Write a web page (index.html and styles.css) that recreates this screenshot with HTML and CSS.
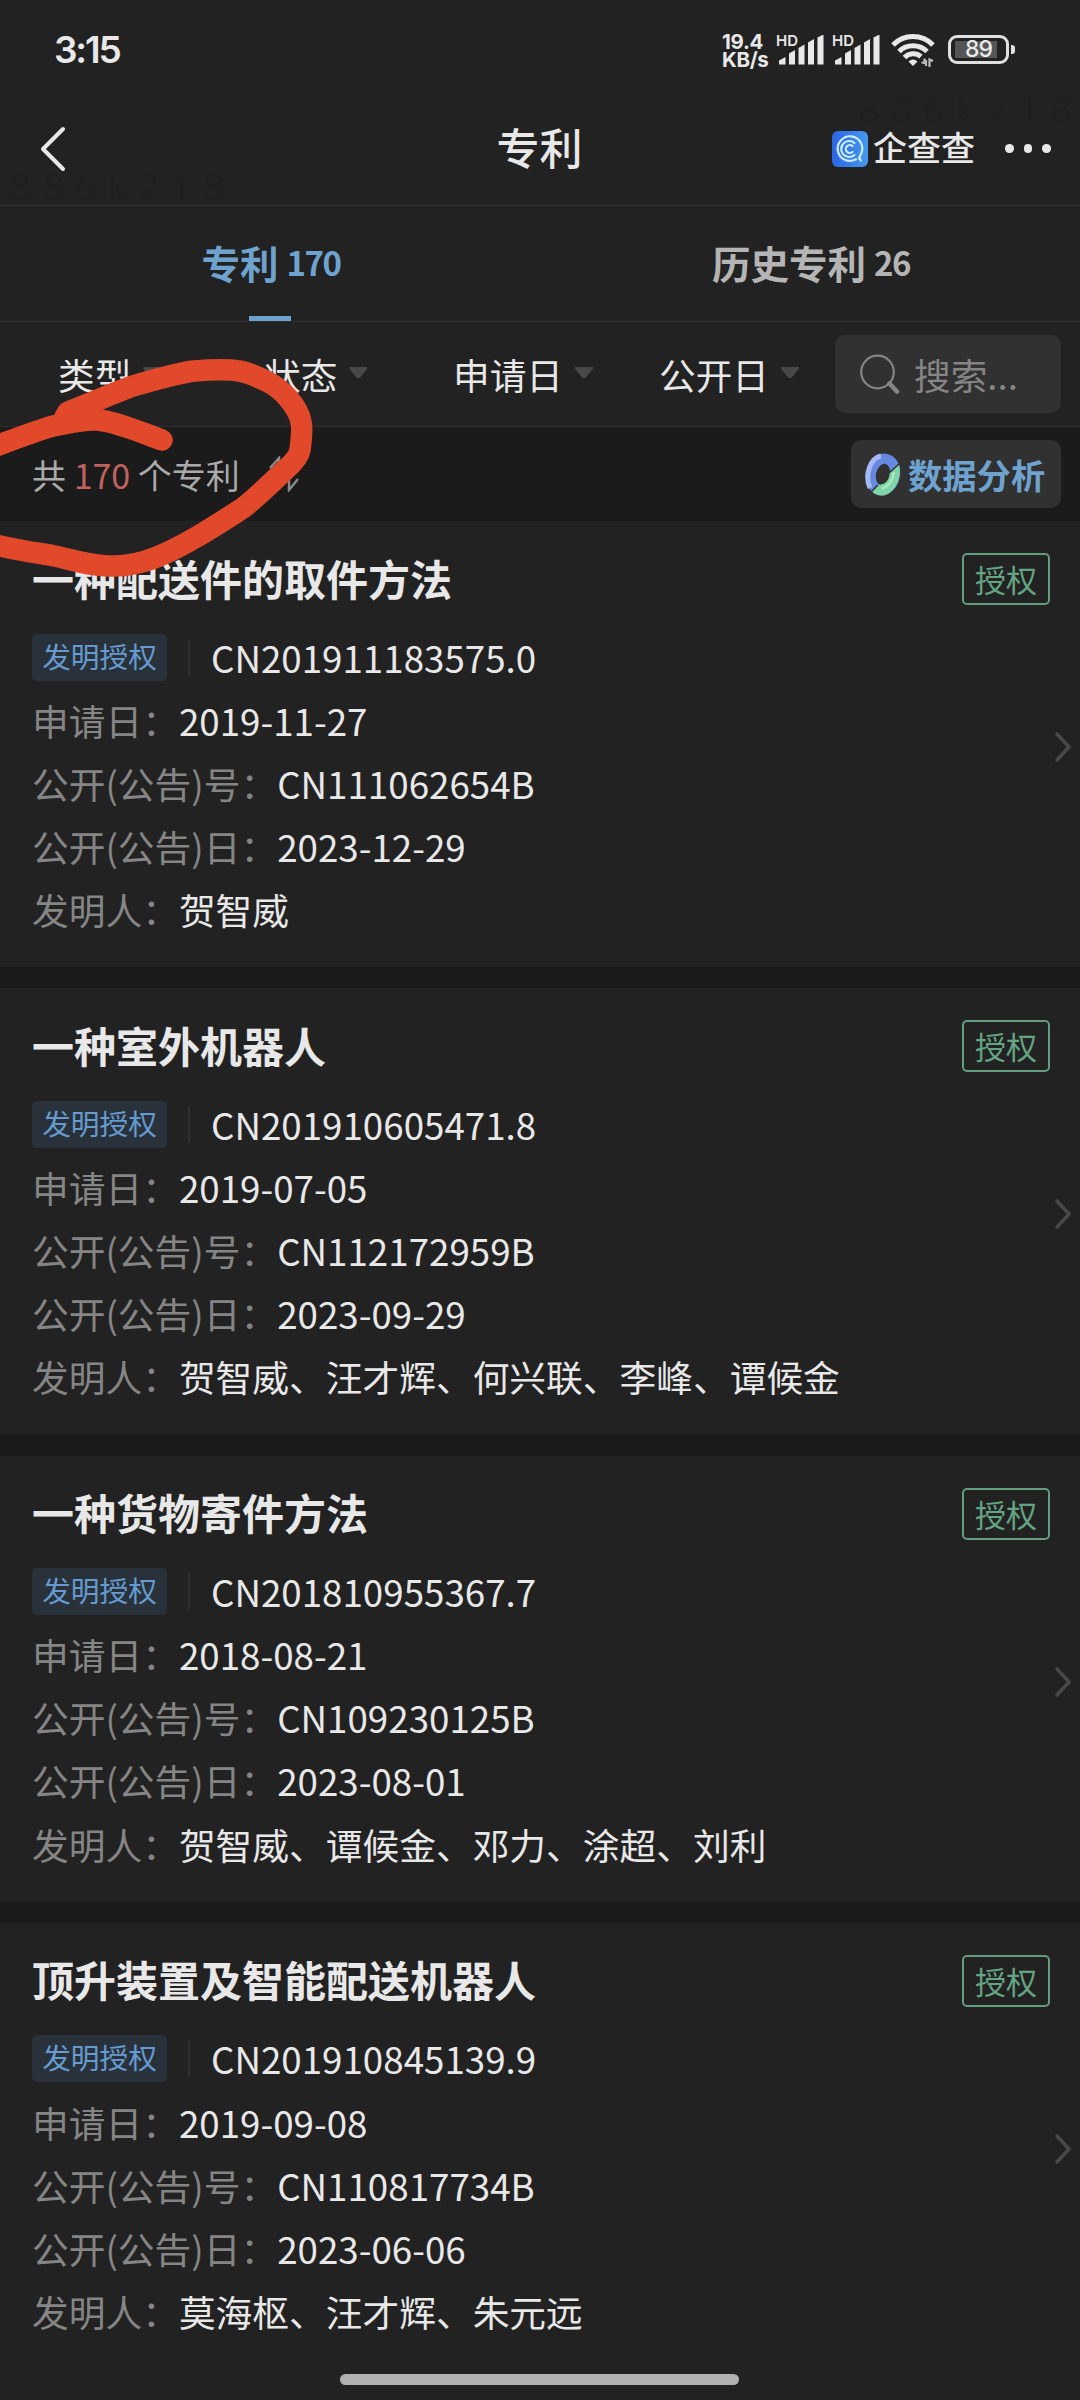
FILE: index.html
```html
<!DOCTYPE html>
<html lang="zh-CN">
<head>
    <meta charset="UTF-8">
    <meta name="viewport" content="width=device-width, initial-scale=1.0">
    <title>专利</title>
    <link rel="stylesheet" href="styles.css">
</head>
<body>
    <!-- Shared icons -->
    <svg class="sprite" width="0" height="0">
        <symbol id="signal" viewBox="0 0 45 30">
            <path d="M0 25.5 6.5 22v7.500H0zM10 18.500l6-3.500v14.500h-6zM19.500 13l6-3.500v20h-6zM29 7.500l6-3.500v25.500h-6zM38.500 2.500l6-3v30h-6z" fill="#e8e8e8"/>
        </symbol>
        <symbol id="chevron" viewBox="0 0 18 32">
            <path d="M3 3l12 13L3 29" fill="none" stroke="#484848" stroke-width="3.600" stroke-linecap="round" stroke-linejoin="round"/>
        </symbol>
    </svg>

    <div class="status-bar">
        <span class="time">3:15</span>
        <div class="status-icons">
            <div class="net-speed"><span>19.4</span><span>KB/s</span></div>
            <div class="signal"><span class="hd">HD</span><svg width="45" height="30"><use href="#signal"/></svg></div>
            <div class="signal"><span class="hd">HD</span><svg width="45" height="30"><use href="#signal"/></svg></div>
            <svg class="wifi" width="44" height="33" viewBox="0 0 44 33">
                <g fill="none" stroke="#e8e8e8" stroke-width="5">
                    <path d="M2 11a28 28 0 0 1 40 0"/>
                    <path d="M8 17.500a20 20 0 0 1 28 0"/>
                    <path d="M13.500 23.500a12 12 0 0 1 16.500-1"/>
                </g>
                <path d="M17.500 27.500q4.500-4 9 0L22 32z" fill="#e8e8e8"/>
                <path d="M30.500 28.500l3 .5v-4.500M35 32v-6M38.500 33v-7.500l3.500 1.500" fill="none" stroke="#bbb" stroke-width="2.200"/>
            </svg>
            <div class="battery"><span>89</span></div>
            <i class="battery-tip"></i>
        </div>
    </div>

    <header class="nav-bar">
        <svg class="back" width="28" height="48" viewBox="0 0 28 48">
            <path d="M24 4 4 24l20 20" fill="none" stroke="#e8e8e8" stroke-width="4" stroke-linecap="round" stroke-linejoin="round"/>
        </svg>
        <h1>专利</h1>
        <div class="brand">
            <svg width="36" height="36" viewBox="0 0 36 36">
                <defs>
                    <linearGradient id="brand-bg" x1="0" x2="1">
                        <stop offset="0" stop-color="#2b66e4"/>
                        <stop offset="1" stop-color="#4599ee"/>
                    </linearGradient>
                </defs>
                <rect width="36" height="36" rx="6" fill="url(#brand-bg)"/>
                <g fill="none" stroke="#c9ecff" stroke-width="2.200" stroke-linecap="round">
                    <path d="M24 28.300A12.300 12.300 0 1 1 29 23l-2 4 2 2.500"/>
                    <path d="M22.500 24a8 8 0 1 1 0-12"/>
                    <path d="M20.500 21a4 4 0 1 1 0-6"/>
                </g>
            </svg>
            <span>企查查</span>
        </div>
        <div class="more"><i></i><i></i><i></i></div>
    </header>

    <nav class="tabs">
        <a class="tab active">专利<small>170</small></a>
        <a class="tab">历史专利<small>26</small></a>
    </nav>

    <section class="filters">
        <span class="filter filter-type">类型<i></i></span>
        <span class="filter filter-status">状态<i></i></span>
        <span class="filter filter-apply">申请日<i></i></span>
        <span class="filter filter-publish">公开日<i></i></span>
        <div class="search">
            <svg width="40" height="41" viewBox="0 0 40 41" fill="none" stroke="#858585">
                <circle cx="17.500" cy="18" r="16.300" stroke-width="2.200"/>
                <path d="M29.500 29.500l7.500 8" stroke-width="4.600" stroke-linecap="round"/>
            </svg>
            <span>搜索...</span>
        </div>
    </section>

    <section class="summary">
        <p>共 <b>170</b> 个专利</p>
        <svg class="sort" width="32" height="36" viewBox="0 0 32 36" fill="none" stroke="#888" stroke-width="2.400">
            <path d="M2 12 11 2v32M21 2v32l9-11"/>
        </svg>
        <button class="analysis">
            <svg width="36" height="43" viewBox="0 0 36 43">
                <ellipse cx="18" cy="21.500" rx="12" ry="16" transform="rotate(12 18 21.500)" fill="none" stroke="#6688e0" stroke-width="10"/>
                <path d="M7 38 13 31.500C20 33 25 26 24.500 20L34 11.500C38 27 27 44 15 42.500 12 42 9 41 7 38z" fill="#7fd5a5"/>
                <path d="M5 35C-1 21 6 5 16 3" fill="none" stroke="#a4b9f6" stroke-width="5"/>
                <path d="M29 19c-1 8-5 14-12 17" fill="none" stroke="#a8e9c4" stroke-width="2.500"/>
                <path d="M6 39l7-7M23 21l11-10" stroke="#313131" stroke-width="1.500"/>
            </svg>
            数据分析
        </button>
    </section>

    <main>
        <article class="card">
            <div class="card-body">
                <div class="card-head"><h2>一种配送件的取件方法</h2><span class="badge">授权</span></div>
                <div class="row"><span class="tag">发明授权</span><span class="number">CN201911183575.0</span></div>
                <div class="row"><label>申请日：</label>2019-11-27</div>
                <div class="row"><label>公开(公告)号：</label>CN111062654B</div>
                <div class="row"><label>公开(公告)日：</label>2023-12-29</div>
                <div class="row"><label>发明人：</label>贺智威</div>
            </div>
            <svg class="chevron" width="18" height="32"><use href="#chevron"/></svg>
        </article>

        <article class="card">
            <div class="card-body">
                <div class="card-head"><h2>一种室外机器人</h2><span class="badge">授权</span></div>
                <div class="row"><span class="tag">发明授权</span><span class="number">CN201910605471.8</span></div>
                <div class="row"><label>申请日：</label>2019-07-05</div>
                <div class="row"><label>公开(公告)号：</label>CN112172959B</div>
                <div class="row"><label>公开(公告)日：</label>2023-09-29</div>
                <div class="row"><label>发明人：</label>贺智威、汪才辉、何兴联、李峰、谭候金</div>
            </div>
            <svg class="chevron" width="18" height="32"><use href="#chevron"/></svg>
        </article>

        <article class="card">
            <div class="card-body">
                <div class="card-head"><h2>一种货物寄件方法</h2><span class="badge">授权</span></div>
                <div class="row"><span class="tag">发明授权</span><span class="number">CN201810955367.7</span></div>
                <div class="row"><label>申请日：</label>2018-08-21</div>
                <div class="row"><label>公开(公告)号：</label>CN109230125B</div>
                <div class="row"><label>公开(公告)日：</label>2023-08-01</div>
                <div class="row"><label>发明人：</label>贺智威、谭候金、邓力、涂超、刘利</div>
            </div>
            <svg class="chevron" width="18" height="32"><use href="#chevron"/></svg>
        </article>

        <article class="card">
            <div class="card-body">
                <div class="card-head"><h2>顶升装置及智能配送机器人</h2><span class="badge">授权</span></div>
                <div class="row"><span class="tag">发明授权</span><span class="number">CN201910845139.9</span></div>
                <div class="row"><label>申请日：</label>2019-09-08</div>
                <div class="row"><label>公开(公告)号：</label>CN110817734B</div>
                <div class="row"><label>公开(公告)日：</label>2023-06-06</div>
                <div class="row"><label>发明人：</label>莫海枢、汪才辉、朱元远</div>
            </div>
            <svg class="chevron" width="18" height="32"><use href="#chevron"/></svg>
        </article>
    </main>

    <footer class="home-bar"><i></i></footer>

    <!-- Watermarks and the red marker line lie over the page -->
    <span class="watermark watermark-left">886k218</span>
    <span class="watermark watermark-right">886k218</span>
    <svg class="marker" width="330" height="600" viewBox="0 0 330 600">
        <path d="M162 440C140 432 115 421 97 420C80 419 66 424 53 426C35 431 18 438-12 449M-12 543C10 549 30 552 50 555C70 559 92 567 114 566C128 566 142 563 157 557C186 545 215 526 243 508C258 496 272 482 285 470C292 464 299 456 300 450C301 440 303 430 301 422C300 415 294 405 288 398C282 391 276 386 268 382C258 377 248 372 239 371C226 369 207 370 194 371C180 373 150 381 133 386C115 392 90 404 68 412L65 417"/>
    </svg>
</body>
</html>
```

FILE: styles.css
```css
* {
    margin: 0;
    padding: 0;
    box-sizing: border-box;
}

body {
    position: relative;
    width: 1080px;
    height: 2400px;
    overflow: hidden;
    display: flex;
    flex-direction: column;
    font-family: 'Noto Sans CJK SC', sans-serif;
    background-color: #1b1b1b;
    color: #e8e8e8;
}

svg {
    display: block;
    flex: none;
}

.sprite {
    position: absolute;
}

/* Phone status bar */
.status-bar {
    display: flex;
    justify-content: space-between;
    height: 92px;
    padding: 0 65px 0 54px;
    background-color: #222;
    font-family: Inter, sans-serif;
    font-weight: 600;
}

.time {
    padding-top: 27px;
    font-size: 37px;
    line-height: 46px;
    letter-spacing: -2.2px;
}

.status-icons {
    display: flex;
    padding-top: 34px;
}

.net-speed {
    display: flex;
    flex-direction: column;
    width: 56px;
    font-size: 20.5px;
    font-weight: 700;
    line-height: 18px;
    letter-spacing: -0.3px;
    margin-top: -1px;
}

.signal {
    position: relative;
    width: 56px;
    padding: 1px 0 0 1px;
}

.hd {
    position: absolute;
    left: -2px;
    top: -1px;
    font-size: 15px;
    line-height: 16px;
}

.wifi {
    margin-left: 1px;
}

.battery {
    width: 61px;
    height: 29px;
    margin: 1px 2px 0 13px;
    border: 3px solid #e0e0e0;
    border-radius: 9px;
    text-align: center;
    font-size: 23px;
    font-weight: 500;
    line-height: 23px;
    letter-spacing: -1px;
    background: linear-gradient(#555, #555) 4px 3px / 42px 17px no-repeat;
}

.battery-tip {
    width: 4px;
    height: 9px;
    margin-top: 11px;
    background-color: #e0e0e0;
    border-radius: 0 3px 3px 0;
}

/* Title bar */
.nav-bar {
    display: grid;
    grid-template-columns: 1fr auto 1fr 88px;
    align-items: center;
    height: 114px;
    padding-left: 39px;
    background-color: #222;
    border-bottom: 1px solid #303030;
}

.nav-bar h1 {
    margin-left: 48px;
    padding-bottom: 6px;
    font-size: 43px;
    font-weight: 500;
    line-height: 60px;
}

.brand {
    display: flex;
    align-items: center;
    justify-content: flex-end;
    gap: 5px;
    padding-right: 17px;
    font-size: 34px;
    font-weight: 500;
    line-height: 44px;
    white-space: nowrap;
}

.brand span {
    margin-top: -3px;
}

.more {
    display: flex;
    gap: 10px;
    padding-left: 13px;
}

.more i {
    width: 8.500px;
    height: 8.500px;
    border-radius: 50%;
    background-color: #e8e8e8;
}

/* Tabs */
.tabs {
    display: flex;
    height: 116px;
    background-color: #222;
    border-bottom: 1px solid #303030;
}

.tab {
    position: relative;
    flex: 1;
    display: flex;
    justify-content: center;
    padding-left: 2px;
    font-size: 38.500px;
    font-weight: 700;
    line-height: 112px;
    color: #b5b5b5;
}

.tab small {
    margin-left: 8px;
    font-size: 33px;
    font-weight: 700;
    letter-spacing: -1.500px;
}

.tab.active {
    color: #6ea2cf;
}

.tab.active::after {
    content: "";
    position: absolute;
    left: 249px;
    bottom: 0;
    width: 42px;
    height: 5px;
    background-color: #6ea2cf;
}

/* Filter row */
.filters {
    display: flex;
    align-items: center;
    height: 105px;
    padding-left: 58px;
    background-color: #222;
    border-bottom: 1px solid #303030;
    font-size: 36.670px;
}

.filter {
    display: flex;
    align-items: center;
    gap: 12px;
    line-height: 52px;
}

.filter i {
    width: 18px;
    height: 11px;
    margin-top: -3px;
    background-color: #484848;
    clip-path: polygon(0 0, 100% 0, 100% 15%, 58% 100%, 42% 100%, 0 15%);
}

.filter-type {
    width: 206px;
}

.filter-status {
    width: 189px;
}

.filter-apply {
    width: 206px;
}

.filter-publish {
    width: 176px;
}

.search {
    display: flex;
    align-items: center;
    gap: 14px;
    width: 226px;
    height: 78px;
    padding-left: 25px;
    background-color: #313131;
    border-radius: 10px;
    color: #858585;
}

/* Count and analysis button */
.summary {
    display: flex;
    align-items: center;
    height: 94px;
    padding: 0 19px 0 32px;
    font-size: 34px;
    color: #aaa;
}

.summary b {
    font-weight: 400;
    color: #c0625f;
}

.sort {
    margin-left: 28px;
}

.analysis {
    display: flex;
    align-items: center;
    gap: 7px;
    width: 210px;
    height: 68px;
    margin-left: auto;
    padding-left: 14px;
    border: none;
    border-radius: 10px;
    background-color: #313131;
    color: #6ea2cf;
    font-family: inherit;
    font-size: 34.300px;
    font-weight: 700;
    line-height: 50px;
    white-space: nowrap;
}

/* Patent cards */
.card {
    display: flex;
    align-items: center;
    height: 446px;
    margin-bottom: 21.300px;
    padding-left: 32px;
    background-color: #222;
}

.card:last-child {
    margin-bottom: 0;
}

.card-body {
    flex: 1;
    height: 446px;
    padding-top: 32px;
}

.card-head {
    display: flex;
    align-items: center;
    justify-content: space-between;
    height: 52px;
    margin-bottom: 20.500px;
}

.card-head h2 {
    padding-bottom: 3px;
    font-size: 42px;
    font-weight: 700;
    line-height: 52px;
}

.badge {
    width: 88px;
    height: 52px;
    margin-right: 4px;
    border: 2px solid #649c80;
    border-radius: 5px;
    text-align: center;
    font-size: 31px;
    line-height: 48px;
    color: #64a483;
}

.row {
    display: flex;
    align-items: center;
    height: 63.100px;
    font-size: 36.720px;
    line-height: 63px;
    white-space: nowrap;
}

.row label {
    color: #858585;
}

.tag {
    width: 135px;
    height: 47px;
    border-radius: 5px;
    background-color: #29323a;
    text-align: center;
    font-size: 28.700px;
    line-height: 43px;
    color: #659bd0;
}

.number {
    display: flex;
    align-items: center;
}

.number::before {
    content: "";
    width: 2px;
    height: 37px;
    margin: 0 21px;
    background-color: #303030;
}

.chevron {
    margin: 6px 8px 0 0;
}

/* Gesture bar */
.home-bar {
    flex: 1;
    display: flex;
    justify-content: center;
    align-items: flex-end;
    padding: 0 1px 15px 0;
    background-color: #222;
}

.home-bar i {
    width: 399px;
    height: 11px;
    border-radius: 6px;
    background-color: #b1b1b1;
}

.watermark {
    position: absolute;
    font-family: 'Noto Sans', sans-serif;
    font-size: 37px;
    font-weight: 300;
    line-height: 50px;
    letter-spacing: 11.500px;
    color: #1f1f1f;
}

.watermark-left {
    left: 10px;
    top: 161px;
}

.watermark-right {
    left: 858px;
    top: 84px;
}

.marker {
    position: absolute;
    left: 0;
    top: 0;
    fill: none;
    stroke: #e2492b;
    stroke-width: 21.500;
    stroke-linecap: round;
    stroke-linejoin: round;
}
```
